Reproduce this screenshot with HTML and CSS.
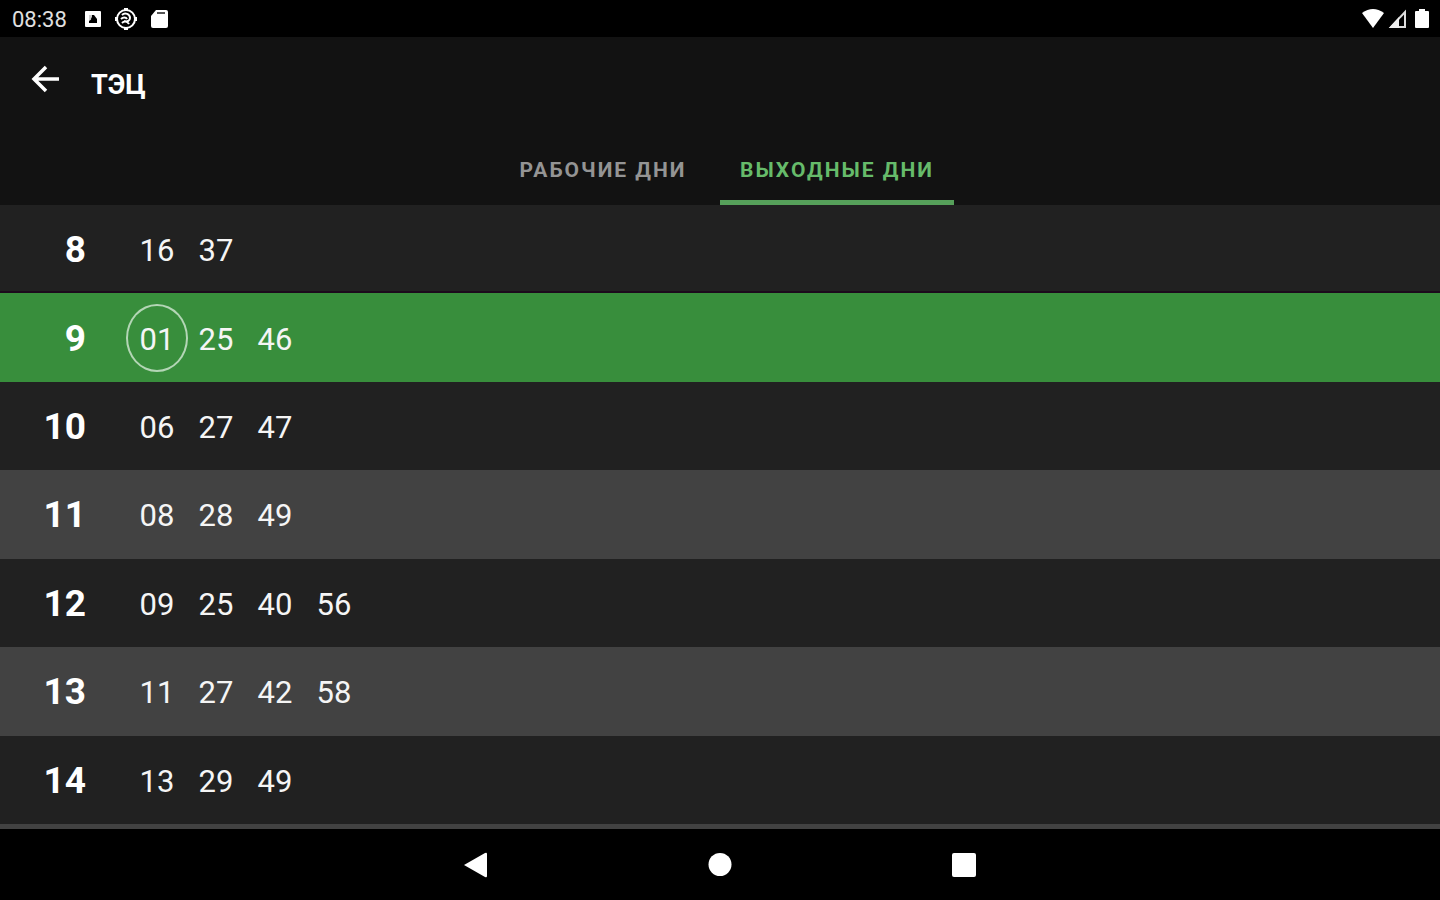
FILE: index.html
```html
<!DOCTYPE html>
<html lang="ru">
<head>
  <meta charset="UTF-8" />
  <meta name="viewport" content="width=device-width, initial-scale=1.0" />
  <title>ТЭЦ</title>
  <link rel="stylesheet" href="styles.css">
</head>
<body>
  <div class="statusbar">
    <span class="clock">08:38</span>
    <svg class="status-icon" viewBox="0 0 20 20">
      <rect x="2" y="2" width="16" height="16" rx="1" fill="#fff"/>
      <path d="M6 6h5l3 4v4H6z" fill="#000"/>
      <path d="M6 6h3v4l-3 2z" fill="#ccc"/>
      <circle cx="10" cy="10" r="2" fill="#000"/>
    </svg>
    <svg class="status-icon round" viewBox="0 0 22 22">
      <g fill="none" stroke="#fff" stroke-width="2">
        <circle cx="11" cy="11" r="9"/>
        <path d="M7 7c3-3 8-1 8 3 0 3-3 4-6 3M6 11c2-2 5-2 6 0M7 15c2-2 5-2 7 1"/>
      </g>
      <path d="M9 0h4v2H9zM9 20h4v2H9zM0 9h2v4H0zM20 9h2v4h-2z" fill="#fff"/>
    </svg>
    <svg class="status-icon" viewBox="0 0 20 20">
      <path d="M7 1h10q2 0 2 2v14q0 2-2 2H4q-2 0-2-2V7z" fill="#fff"/>
      <path d="M8 4h8" stroke="#555" stroke-width="2"/>
    </svg>
    <div class="status-right">
      <svg width="24" height="20" viewBox="0 0 24 20">
        <path d="M1 4Q12-4 23 4L12 19z" fill="#fff"/>
      </svg>
      <svg width="20" height="20" viewBox="0 0 20 20">
        <path d="M18 3v15H4z" fill="none" stroke="#ddd" stroke-width="2"/>
        <path d="M2 19L12 8v11z" fill="#eee"/>
        <path d="M12 12v4h2V9z" fill="#000"/>
      </svg>
      <svg class="battery" width="14" height="20" viewBox="0 0 14 20">
        <path d="M4 0h6v2h3q1 0 1 1v15q0 1-1 1H1q-1 0-1-1V3q0-1 1-1h3z" fill="#fff"/>
      </svg>
    </div>
  </div>

  <header class="appbar">
    <div class="toolbar">
      <button class="back" type="button" aria-label="Назад">
        <svg width="30" height="30" viewBox="0 0 30 30">
          <path d="M29 15H4M16 3L4 15l12 12" fill="none" stroke="#fff" stroke-width="3.5"/>
        </svg>
      </button>
      <h1>ТЭЦ</h1>
    </div>
    <div class="tabs" role="tablist">
      <button class="tab" type="button" role="tab" aria-selected="false">РАБОЧИЕ ДНИ</button>
      <button class="tab active" type="button" role="tab" aria-selected="true">ВЫХОДНЫЕ ДНИ</button>
    </div>
  </header>

  <main>
    <table class="timetable">
      <tbody>
        <tr><th scope="row">8</th><td>16</td><td>37</td></tr>
        <tr class="current"><th scope="row">9</th><td class="next">01</td><td>25</td><td>46</td></tr>
        <tr><th scope="row">10</th><td>06</td><td>27</td><td>47</td></tr>
        <tr class="odd"><th scope="row">11</th><td>08</td><td>28</td><td>49</td></tr>
        <tr><th scope="row">12</th><td>09</td><td>25</td><td>40</td><td>56</td></tr>
        <tr class="odd"><th scope="row">13</th><td>11</td><td>27</td><td>42</td><td>58</td></tr>
        <tr><th scope="row">14</th><td>13</td><td>29</td><td>49</td></tr>
        <!-- top edge of the next row -->
        <tr class="odd"></tr>
      </tbody>
    </table>
  </main>

  <nav class="navbar">
    <button type="button" aria-label="Назад">
      <svg width="26" height="28" viewBox="0 0 26 28"><path d="M1 14L22 2q2-1 2 1v22q0 2-2 1z" fill="#fff"/></svg>
    </button>
    <button type="button" aria-label="Домой">
      <svg width="26" height="28" viewBox="0 0 26 28"><ellipse cx="13" cy="13.5" rx="11.5" ry="11.5" fill="#fff"/></svg>
    </button>
    <button type="button" aria-label="Недавние">
      <svg width="26" height="28" viewBox="0 0 26 28"><rect x="1" y="2" width="24" height="24" rx="2" fill="#fff"/></svg>
    </button>
  </nav>
</body>
</html>
```
FILE: styles.css
```css
* {
  box-sizing: border-box;
}

body {
  margin: 0;
  min-height: 100vh;
  display: flex;
  flex-direction: column;
  background: #000;
  color: #fff;
  font-family: Roboto, sans-serif;
}

button {
  padding: 0;
  border: none;
  background: none;
  color: inherit;
  font-family: inherit;
  cursor: pointer;
}

svg {
  display: block;
}

.statusbar {
  display: flex;
  align-items: center;
  height: 37px;
  padding: 0 11px 0 12px;
}

.clock {
  width: 71px;
  padding-top: 2px;
  font-size: 22px;
  line-height: 36px;
  color: #e0e0e0;
}

.status-icon {
  width: 20px;
  height: 20px;
  margin-right: 12px;
}

.status-icon.round {
  width: 22px;
  height: 22px;
}

.status-right {
  display: flex;
  align-items: center;
  gap: 2px;
  margin-left: auto;
}

.battery {
  margin-left: 6px;
}

.appbar {
  background: #121212;
}

.toolbar {
  display: flex;
  align-items: center;
  height: 96px;
  padding: 0 30px;
}

.back {
  margin-bottom: 12px;
}

h1 {
  margin: 0 0 0 31px;
  font-size: 27px;
  line-height: 36px;
  font-weight: 700;
}

.tabs {
  display: flex;
  justify-content: center;
}

.tab {
  width: 234px;
  height: 72px;
  border-top: 6px solid transparent;
  border-bottom: 5px solid transparent;
  font-size: 21px;
  font-weight: 700;
  letter-spacing: 2px;
  white-space: nowrap;
  color: #949494;
}

.tab.active {
  border-bottom-color: #56a05a;
  color: #66bb6a;
}

main {
  flex: 1;
  display: flex;
}

.timetable {
  flex: 1;
  display: flex;
}

.timetable tbody {
  flex: 1;
  display: grid;
  grid-template-rows: repeat(7, 1fr) 5px;
}

.timetable tr {
  display: flex;
  align-items: center;
  background: #212121;
}

.timetable tr.odd {
  background: #424242;
}

.timetable tr.current {
  background: #388e3c;
  box-shadow: 0 -2px 0 #1c0a1c;
}

.timetable th {
  width: 128px;
  padding: 2px 42px 0 0;
  font-size: 37px;
  line-height: 44px;
  font-weight: 700;
  text-align: right;
}

.timetable td {
  width: 58px;
  margin-right: 1px;
  padding: 4px 0 0;
  font-size: 31px;
  line-height: 60px;
  text-align: center;
  color: #f5f5f5;
}

.timetable td.next {
  border-radius: 50%;
  box-shadow: 0 0 0 2px #b4d6b6;
}

.navbar {
  display: flex;
  justify-content: center;
  gap: 218px;
  height: 71px;
}
```
